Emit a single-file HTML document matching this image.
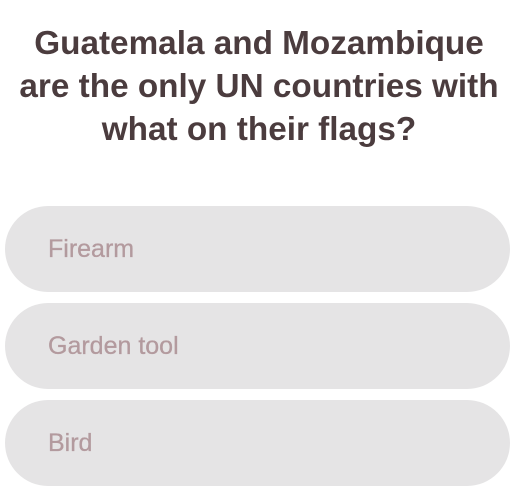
<!DOCTYPE html>
<html><head><style>
body{margin:0;width:520px;height:480px;background:#fff;overflow:hidden;font-family:"Liberation Sans",sans-serif;position:relative}
h1{position:absolute;top:22px;left:0;width:518px;margin:0;text-align:center;font-size:33.3px;line-height:43px;font-weight:bold;color:#4b3c3e}
.b{position:absolute;left:5px;width:505px;height:86px;border-radius:43px;background:#e5e4e5;color:#b39a9e;font-size:25px;box-sizing:border-box;padding-left:43px;line-height:86px;-webkit-text-stroke:0.3px #b39a9e}
</style></head><body>
<h1>Guatemala and Mozambique<br>are the only UN countries with<br>what on their flags?</h1>
<div class="b" style="top:206px">Firearm</div>
<div class="b" style="top:303px">Garden tool</div>
<div class="b" style="top:400px">Bird</div>
</body></html>
